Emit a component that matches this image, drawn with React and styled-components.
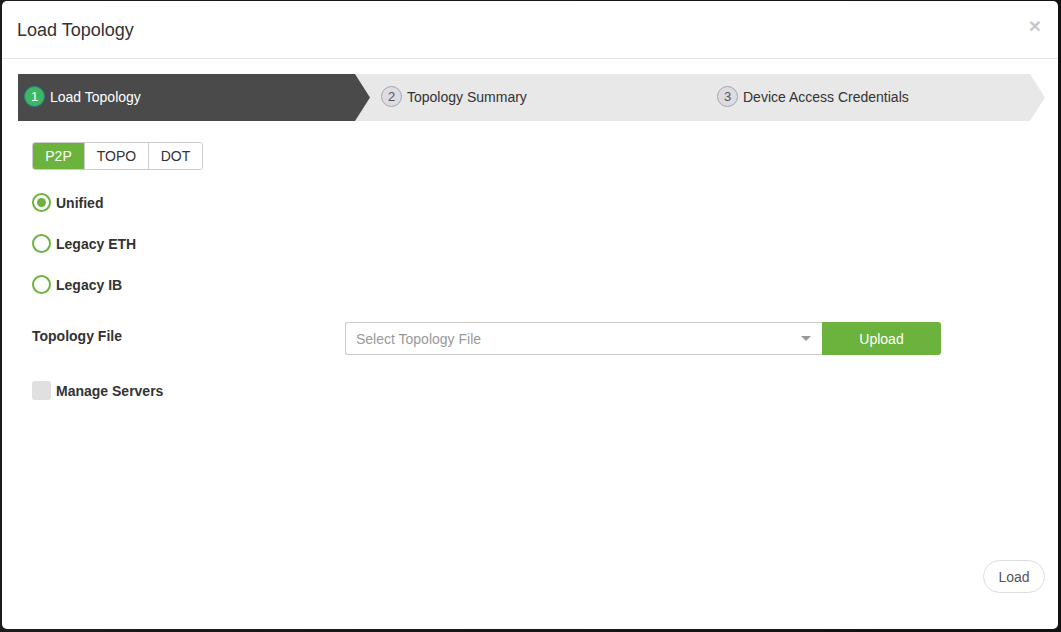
import React, { useState } from "react";
import styled, { createGlobalStyle } from "styled-components";

const Global = createGlobalStyle`
  html, body { margin: 0; padding: 0; background: #161616; }
  body { font-family: "Liberation Sans", Arial, sans-serif; }
  * { box-sizing: border-box; }
`;

const Page = styled.div`
  width: 1061px;
  height: 632px;
  padding: 1px 3px 3px 2px;
  background: linear-gradient(90deg, #1c1c1c 0%, #111 100%);
`;

const Modal = styled.div`
  width: 1056px;
  height: 628px;
  background: #fff;
  border-radius: 5px;
  display: flex;
  flex-direction: column;
  overflow: hidden;
`;

const Header = styled.div`
  height: 58px;
  padding: 0 15px;
  border-bottom: 1px solid #e5e5e5;
  display: flex;
  align-items: center;
  justify-content: space-between;
`;

const Title = styled.h4`
  margin: 0;
  font-size: 18px;
  font-weight: normal;
  color: #333;
  padding-top: 2px;
`;

const Close = styled.span`
  font-size: 21px;
  font-weight: bold;
  color: #c8c8c8;
  line-height: 1;
  margin-right: 2px;
  margin-top: -9px;
`;

const Body = styled.div`
  flex: 1;
  padding: 15px 13px 0 16px;
  display: flex;
  flex-direction: column;
`;

const Wizard = styled.div`
  position: relative;
  height: 47px;
  width: 1027px;
  display: flex;
  background: #e8e8e8;
  clip-path: polygon(0 0, calc(100% - 15px) 0, 100% 50%, calc(100% - 15px) 100%, 0 100%);
`;

const Step = styled.div`
  width: ${(p) => (p.$active ? "352px" : "337px")};
  flex: none;
  display: flex;
  align-items: center;
  gap: 5px;
  padding-left: ${(p) => p.$pad}px;
  padding-bottom: 2px;
  font-size: 14px;
  color: ${(p) => (p.$active ? "#fff" : "#333")};
  background: ${(p) => (p.$active ? "#4a4a4a" : "transparent")};
  margin-right: ${(p) => (p.$active ? "-15px" : "0")};
  z-index: ${(p) => (p.$active ? 1 : 0)};
  clip-path: ${(p) =>
    p.$active
      ? "polygon(0 0, calc(100% - 15px) 0, 100% 50%, calc(100% - 15px) 100%, 0 100%)"
      : "none"};
`;

const StepNum = styled.span`
  width: 21px;
  height: 21px;
  border-radius: 50%;
  display: inline-flex;
  align-items: center;
  justify-content: center;
  font-size: 13px;
  background: ${(p) => (p.$active ? "#3db760" : "#dcdce2")};
  border: 1px solid ${(p) => (p.$active ? "#2a7e9c" : "#a3a3aa")};
  color: ${(p) => (p.$active ? "#fff" : "#555")};
`;

const Content = styled.div`
  padding-left: 14px;
  display: flex;
  flex-direction: column;
`;

const Segmented = styled.div`
  margin-top: 21px;
  display: flex;
  align-self: flex-start;
  border: 1px solid #ccc;
  border-radius: 3px;
  overflow: hidden;
  height: 28px;
`;

const SegButton = styled.button`
  font-family: inherit;
  font-size: 14px;
  border: none;
  border-left: ${(p) => (p.$first ? "none" : "1px solid #ccc")};
  background: ${(p) => (p.$active ? "#6cb33e" : "#fff")};
  color: ${(p) => (p.$active ? "#fff" : "#333")};
  width: ${(p) => p.$w}px;
  padding: 0;
  cursor: pointer;
`;

const RadioList = styled.div`
  margin-top: 23px;
  display: flex;
  flex-direction: column;
  gap: 22px;
`;

const RadioRow = styled.label`
  display: flex;
  align-items: center;
  gap: 5px;
  font-size: 14px;
  font-weight: bold;
  color: #333;
  height: 19px;
  cursor: pointer;
`;

const RadioCircle = styled.span`
  width: 19px;
  height: 19px;
  border-radius: 50%;
  border: 2px solid #6cb33e;
  display: inline-flex;
  align-items: center;
  justify-content: center;
  &::after {
    content: "";
    width: 9px;
    height: 9px;
    border-radius: 50%;
    background: ${(p) => (p.$checked ? "#6cb33e" : "transparent")};
  }
`;

const FileRow = styled.div`
  margin-top: 28px;
  display: flex;
  align-items: center;
`;

const FieldLabel = styled.div`
  width: 313px;
  font-size: 14px;
  font-weight: bold;
  color: #333;
  margin-top: -6px;
`;

const Select = styled.div`
  width: 477px;
  height: 33px;
  border: 1px solid #ccc;
  border-right: none;
  border-radius: 3px 0 0 3px;
  display: flex;
  align-items: center;
  justify-content: space-between;
  padding: 0 11px 0 10px;
  font-size: 14px;
  color: #999;
`;

const Caret = styled.span`
  width: 0;
  height: 0;
  border-left: 5px solid transparent;
  border-right: 5px solid transparent;
  border-top: 5px solid #999;
`;

const UploadButton = styled.button`
  width: 119px;
  height: 33px;
  border: none;
  border-radius: 0 3px 3px 0;
  background: #6cb33e;
  color: #fff;
  font-family: inherit;
  font-size: 14px;
`;

const CheckRow = styled.label`
  margin-top: 26px;
  display: flex;
  align-items: center;
  gap: 5px;
  font-size: 14px;
  font-weight: bold;
  color: #333;
`;

const CheckBox = styled.span`
  width: 19px;
  height: 19px;
  border-radius: 3px;
  background: #e0e0e0;
`;

const Footer = styled.div`
  margin-top: auto;
  display: flex;
  justify-content: flex-end;
  padding: 0 13px 36px 0;
`;

const LoadButton = styled.button`
  height: 33px;
  width: 62px;
  border: 1px solid #ddd;
  border-radius: 17px;
  background: #fff;
  color: #555;
  font-family: inherit;
  font-size: 14px;
`;

export default function App() {
  const [format, setFormat] = useState("P2P");
  const [kind, setKind] = useState("Unified");
  const steps = [
    { n: 1, label: "Load Topology", pad: 6 },
    { n: 2, label: "Topology Summary", pad: 26 },
    { n: 3, label: "Device Access Credentials", pad: 25 },
  ];
  const segs = [
    { k: "P2P", w: 51 },
    { k: "TOPO", w: 64 },
    { k: "DOT", w: 54 },
  ];
  return (
    <>
      <Global />
      <Page>
        <Modal>
          <Header>
            <Title>Load Topology</Title>
            <Close>×</Close>
          </Header>
          <Body>
            <Wizard>
              {steps.map((s, i) => (
                <Step key={s.n} $active={i === 0} $pad={s.pad}>
                  <StepNum $active={i === 0}>{s.n}</StepNum>
                  {s.label}
                </Step>
              ))}
            </Wizard>
            <Content>
              <Segmented>
                {segs.map((s, i) => (
                  <SegButton
                    key={s.k}
                    $w={s.w}
                    $first={i === 0}
                    $active={format === s.k}
                    onClick={() => setFormat(s.k)}
                  >
                    {s.k}
                  </SegButton>
                ))}
              </Segmented>
              <RadioList>
                {["Unified", "Legacy ETH", "Legacy IB"].map((r) => (
                  <RadioRow key={r} onClick={() => setKind(r)}>
                    <RadioCircle $checked={kind === r} />
                    {r}
                  </RadioRow>
                ))}
              </RadioList>
              <FileRow>
                <FieldLabel>Topology File</FieldLabel>
                <Select>
                  Select Topology File
                  <Caret />
                </Select>
                <UploadButton>Upload</UploadButton>
              </FileRow>
              <CheckRow>
                <CheckBox />
                Manage Servers
              </CheckRow>
            </Content>
          </Body>
          <Footer>
            <LoadButton>Load</LoadButton>
          </Footer>
        </Modal>
      </Page>
    </>
  );
}
